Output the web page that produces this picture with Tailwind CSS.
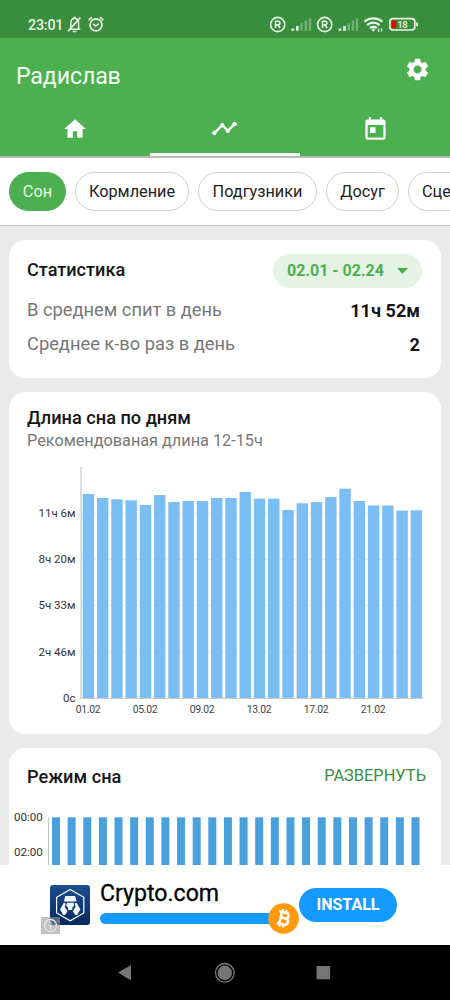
<!DOCTYPE html>
<html lang="ru">
<head>
<meta charset="utf-8">
<title>Статистика сна</title>
<script src="https://cdn.jsdelivr.net/npm/@tailwindcss/browser@4"></script>
</head>
<body class="bg-[#eaeaea] font-['Roboto',sans-serif]">
<div class="w-[450px] h-[1000px] flex flex-col overflow-hidden text-[#161616]">

  <!-- Status bar -->
  <div class="h-[38px] shrink-0 bg-[#388e3c] flex items-start pt-[15px] pl-7 text-[#e8f5e6]">
    <span class="text-[14.3px] tracking-[-0.2px] font-medium leading-[20px] w-[38px] whitespace-nowrap">23:01</span>
    <svg class="w-[384px] h-5 shrink-0" viewBox="66 15 384 20" fill="none" stroke="currentColor">
      <g stroke-width="1.5">
        <path d="M69.500 29.300h10.800M70.800 29V23.500c0-3 1.500-5 3.800-5 2.400 0 4 2 4 5V29" />
        <path d="M68 31.200 80.300 17.600" stroke-width="1.7"/>
        <path d="M72.800 31.500h3.600M73.300 17.400h2.600"/>
      </g>
      <g stroke-width="1.700">
        <circle cx="96" cy="24.800" r="6"/>
        <path d="M93.300 23.800 95.600 26.200 98.800 23.600" />
        <path d="M88.600 20.200 92 17M103.400 20.200 100 17"/>
      </g>
      <g stroke-width="1.600">
        <circle cx="277.700" cy="24.500" r="7.100"/><path d="M275.500 28v-6.800h2.600a1.800 1.800 0 0 1 0 3.700h-2.600M278 25l2 3"/>
        <circle cx="324.700" cy="24.500" r="7.100"/><path d="M322.500 28v-6.800h2.600a1.800 1.800 0 0 1 0 3.700h-2.600M325 25l2 3"/>
      </g>
      <g stroke="none" fill="currentColor">
        <path d="M291.400 28.600h2.800v2.200h-2.800zM296 26h2.600v4.800H296z"/>
        <path opacity=".35" d="M300.400 23.300h2.400v7.500h-2.400zM304.600 20.800h2.400v10h-2.400zM308.800 18.200h2.400v12.600h-2.400z"/>
        <path d="M338.600 28.600h2.800v2.200h-2.800zM343.200 26h2.600v4.800h-2.600z"/>
        <path opacity=".35" d="M347.500 23.300h2.400v7.500h-2.400zM351.700 20.800h2.400v10h-2.400zM355.800 18.200h2.400v12.600h-2.400z"/>
      </g>
      <g stroke-width="2.200">
        <path d="M364.400 21.700c5-4.500 13-4.500 18 0"/>
        <path d="M367.200 25.100c3.600-3.200 8.800-3.200 12.400 0"/>
        <path d="M370 28.200c2-1.700 4.800-1.700 6.800 0"/>
      </g>
      <circle cx="373.400" cy="30" r="1.400" fill="currentColor" stroke="none"/>
      <path d="M378.800 28.400v3.200M381.400 28.400v3.200M377.700 30.500l1.100 1.300M382.400 29.500l-1-1.200" stroke-width="1"/>
      <rect x="389.800" y="18.600" width="25" height="11.400" rx="3.200" stroke-width="1.700"/>
      <rect x="391.800" y="20.400" width="4.600" height="7.800" rx="1" fill="#d50e00" stroke="none"/>
      <path d="M417 22.600v3.600" stroke-width="1.800"/>
      <text x="397.200" y="27.900" font-size="9.600" font-weight="500" fill="currentColor" stroke="none" textLength="10.400">18</text>
    </svg>
  </div>

  <!-- App bar -->
  <div class="h-[118px] shrink-0 bg-[#4caf50] flex flex-col text-white">
    <div class="h-[64px] flex items-center justify-between pl-4 pr-[19px]">
      <span class="text-[23.200px] leading-8 tracking-[-0.15px] mt-[12px] text-[#f3fbf1]">Радислав</span>
      <svg class="w-[27px] h-[27px] -mt-px" viewBox="0 0 24 24" fill="currentColor"><path d="M19.140 12.940c.04-.3.06-.61.06-.94 0-.32-.02-.64-.07-.94l2.030-1.580a.49.49 0 0 0 .12-.61l-1.920-3.320a.488.488 0 0 0-.59-.22l-2.390.96c-.5-.38-1.030-.7-1.620-.94l-.36-2.540a.484.484 0 0 0-.48-.41h-3.840c-.24 0-.43.17-.47.41l-.36 2.540c-.59.24-1.130.57-1.620.94l-2.390-.96c-.22-.08-.47 0-.59.22L2.740 8.870c-.12.21-.08.47.12.61l2.030 1.580c-.05.3-.09.63-.09.94s.02.64.07.94l-2.030 1.580a.49.49 0 0 0-.12.61l1.920 3.320c.12.22.37.29.59.22l2.390-.96c.5.38 1.030.7 1.620.94l.36 2.540c.05.24.24.41.48.41h3.840c.24 0 .44-.17.47-.41l.36-2.540c.59-.24 1.130-.56 1.620-.94l2.390.96c.22.08.47 0 .59-.22l1.920-3.320c.12-.22.07-.47-.12-.61l-2.010-1.580zM12 15.600c-1.980 0-3.600-1.620-3.600-3.600s1.620-3.600 3.600-3.600 3.600 1.620 3.600 3.600-1.620 3.600-3.600 3.600z"/></svg>
    </div>
    <div class="h-[54px] grid grid-cols-3">
      <div class="flex justify-center pt-[14px]"><svg class="w-[26px] h-[26px]" viewBox="0 0 24 24" fill="currentColor"><path d="M10 20v-6h4v6h5v-8h3L12 3 2 12h3v8z"/></svg></div>
      <div class="flex justify-center pt-[13px] pr-[2px] border-b-[3px] border-white"><svg class="w-[27px] h-[27px]" viewBox="0 0 24 24" fill="currentColor"><path d="M23 8c0 1.100-.9 2-2 2-.18 0-.35-.02-.51-.07l-3.560 3.550c.05.16.07.34.07.52 0 1.100-.9 2-2 2s-2-.9-2-2c0-.18.02-.36.07-.52l-2.550-2.550c-.16.05-.34.07-.52.07s-.36-.02-.52-.07l-4.550 4.560c.05.16.07.33.07.51 0 1.100-.9 2-2 2s-2-.9-2-2 .9-2 2-2c.18 0 .35.02.51.07l4.560-4.550C8.020 9.360 8 9.180 8 9c0-1.100.9-2 2-2s2 .9 2 2c0 .18-.02.36-.07.52l2.550 2.550c.16-.05.34-.07.52-.07s.36.02.52.07l3.550-3.560C19.020 8.350 19 8.180 19 8c0-1.100.9-2 2-2s2 .9 2 2z"/></svg></div>
      <div class="flex justify-center pt-[14px]"><svg class="w-[27px] h-[27px]" viewBox="0 0 24 24" fill="currentColor"><path d="M19 3h-1V1h-2v2H8V1H6v2H5c-1.110 0-1.990.9-1.990 2L3 19c0 1.100.89 2 2 2h14c1.100 0 2-.9 2-2V5c0-1.100-.9-2-2-2zm0 16H5V8h14v11zM7 10h5v5H7z"/></svg></div>
    </div>
  </div>

  <!-- Category chips -->
  <div class="h-[70px] shrink-0 bg-white border-t-2 border-b border-t-[#b9bbb9] border-b-[#c2c2c2] flex gap-[9px] pt-[14px] pl-[9px] overflow-hidden text-[16.300px] leading-[37px] whitespace-nowrap text-[#222]">
    <div class="w-[57px] h-[39px] shrink-0 rounded-full bg-[#4caf50] border border-[#4caf50] text-[#eefbe9] text-center">Сон</div>
    <div class="w-[114px] h-[39px] shrink-0 rounded-full border border-[#cfd0cf] text-center">Кормление</div>
    <div class="w-[119px] h-[39px] shrink-0 rounded-full border border-[#cfd0cf] text-center">Подгузники</div>
    <div class="w-[73px] h-[39px] shrink-0 rounded-full border border-[#cfd0cf] text-center">Досуг</div>
    <div class="w-[96px] h-[39px] shrink-0 rounded-full border border-[#cfd0cf] pl-[13px]">Сце</div>
  </div>

  <!-- Content -->
  <div class="h-[639px] shrink-0 bg-[#eaeaea] px-[9px] pt-[14px] flex flex-col gap-[14px] overflow-hidden">
    <section class="h-[138px] shrink-0 bg-white rounded-[16px] pl-[18px] pr-[19px] pt-[14px]">
      <div class="flex justify-between items-center h-[34px]">
        <h2 class="text-[18.100px] leading-[24px] -mt-[2px] font-medium">Статистика</h2>
        <div class="w-[149px] h-[34px] rounded-full bg-[#e4f3e4] flex items-center pl-[14px] text-[#4caf50] text-[16px] font-bold whitespace-nowrap">
          <span class="w-[96px]">02.01 - 02.24</span>
          <svg class="w-[11px] h-[6px] ml-[14px]" viewBox="0 0 11 6" fill="currentColor"><path d="M0 0h11L5.500 6z"/></svg>
        </div>
      </div>
      <div class="flex justify-between items-center h-[34px] mt-[6px] pr-[2px]">
        <span class="text-[18.300px] leading-[24px] -mt-[2px] text-[#777]">В среднем спит в день</span>
        <b class="text-[18.100px] leading-[24px]">11ч 52м</b>
      </div>
      <div class="flex justify-between items-center h-[34px] pr-[2px]">
        <span class="text-[18.300px] leading-[24px] -mt-[2px] text-[#777]">Среднее к-во раз в день</span>
        <b class="text-[18.100px] leading-[24px]">2</b>
      </div>
    </section>

    <section class="h-[342px] shrink-0 bg-white rounded-[16px] pt-[14px]">
      <h2 class="pl-[18px] text-[18.200px] leading-[23px] font-medium">Длина сна по дням</h2>
      <p class="pl-[18px] text-[16.250px] leading-[23px] text-[#777]">Рекомендованая длина 12-15ч</p>
      <svg class="w-[432px] h-[270px] block" viewBox="9 452 432 270" id="length-chart">
        <path d="M81 513.500H422M81 559.500H422M81 605.500H422M81 652H422" stroke="#ececec" stroke-width="1" fill="none"/>
        <path d="M81 467V698.500H423" stroke="#c9c9c9" stroke-width="1.200" fill="none"/>
        <g id="length-bars" fill="#7bbef5"></g>
        <g fill="#333" font-size="11.500" text-anchor="end">
          <text x="75.500" y="516.800">11ч 6м</text>
          <text x="75.500" y="563">8ч 20м</text>
          <text x="75.500" y="609.300">5ч 33м</text>
          <text x="75.500" y="655.500">2ч 46м</text>
          <text x="75.500" y="701.700">0с</text>
        </g>
        <g fill="#444" font-size="10.400" text-anchor="middle" letter-spacing="-0.300">
          <text x="88" y="712.800">01.02</text>
          <text x="145" y="712.800">05.02</text>
          <text x="202.100" y="712.800">09.02</text>
          <text x="259" y="712.800">13.02</text>
          <text x="316.100" y="712.800">17.02</text>
          <text x="373.100" y="712.800">21.02</text>
        </g>
      </svg>
    </section>

    <section class="h-[200px] shrink-0 bg-white rounded-[16px] pt-[16px]">
      <div class="flex justify-between items-center h-[26px] pl-[18px] pr-[15px]">
        <h2 class="text-[18.200px] leading-[24px] font-medium">Режим сна</h2>
        <span class="text-[16.400px] leading-[24px] -mt-[2px] text-[#388e3c]">РАЗВЕРНУТЬ</span>
      </div>
      <svg class="w-[432px] h-[75px] block" viewBox="9 790 432 75">
        <path d="M48.500 817V865" stroke="#c4c4c4" stroke-width="1"/>
        <g id="schedule-bars" fill="#4b9fda"></g>
        <g fill="#333" font-size="11.600" text-anchor="end">
          <text x="42.800" y="821">00:00</text>
          <text x="42.800" y="856">02:00</text>
        </g>
      </svg>
    </section>
  </div>

  <!-- Ad banner -->
  <div class="h-[80px] shrink-0 bg-white flex pl-[50px] relative">
    <svg class="w-10 h-10 mt-5 shrink-0" viewBox="0 0 40 40">
      <defs><linearGradient id="badge" x1="0" y1="0" x2="0" y2="1"><stop offset="0" stop-color="#1a4f92"/><stop offset="1" stop-color="#082a5e"/></linearGradient></defs>
      <rect width="40" height="40" rx="3" fill="url(#badge)"/>
      <path d="M20.200 4.500 33.800 12.300V28L20.200 35.800 6.600 28V12.300z" fill="none" stroke="#fff" stroke-width="1.200"/>
      <path d="M15.300 11h9.800l1.500 5.600H13.800zM17 17.800h6.600l.6 2.700-1.900 2.300v2.100h-4.200v-2.100l-1.900-2.300zM13.700 18l2 .2-.9 3.800 2.800 4.300-2.600 3.600h-1.700L10 24.600zM26.700 18l-2 .2.9 3.800-2.800 4.300 2.600 3.600h1.700l3.300-5.300z" fill="#f4f7fb"/>
    </svg>
    <div class="ml-[10px] w-[199px] pt-[14px]">
      <div class="text-[23.100px] leading-[30px] text-black font-normal [-webkit-text-stroke:0.3px_black]">Crypto.com</div>
      <div class="mt-[4px] h-[11px] w-[190px] rounded-full bg-[#159bff]"></div>
    </div>
    <div class="w-[98px] h-[34px] mt-[23px] rounded-full bg-[#159bff] text-white text-[16px] font-bold leading-[34px] text-center">INSTALL</div>
    <svg class="absolute left-[268px] top-[38px] w-[31px] h-[31px]" viewBox="0 0 31 31">
      <circle cx="15.500" cy="15.500" r="15.300" fill="#ff9b0b"/>
      <g transform="rotate(13 15.500 15.500)" fill="none" stroke="#fff" stroke-width="2.500">
        <path d="M9.800 9.300h6.700c4.400 0 4.400 5.700 0 5.700h-4M9.800 21.400h7.200c5 0 5-6.400 0-6.400M12.500 9.300v12"/>
        <path d="M13.200 6.300v3M16.800 6.300v3M13.200 21.500v3M16.800 21.500v3" stroke-width="1.800"/>
      </g>
    </svg>
    <div class="absolute left-[41px] top-[52px] w-[19px] h-[17px] bg-[#9a9a9a]/60 flex items-center justify-center">
      <svg class="w-[15px] h-[15px]" viewBox="0 0 15 15" fill="none" stroke="#e4e4e4"><circle cx="7.500" cy="7.500" r="6" stroke-width="1.300"/><path d="M7.500 6.500v4.500M7.500 3.800v1.400" stroke-width="1.700"/></svg>
    </div>
  </div>

  <!-- System navigation -->
  <div class="h-[55px] shrink-0 bg-black">
    <svg class="w-[450px] h-[55px] block" viewBox="0 945 450 55">
      <path d="M118 972.500 131 965v15.500z" fill="#757575"/>
      <circle cx="224.800" cy="972.800" r="9.300" fill="none" stroke="#7a7a7a" stroke-width="1.300"/>
      <circle cx="224.800" cy="972.800" r="7.200" fill="#757575"/>
      <rect x="316.500" y="966" width="13.600" height="13.300" fill="#757575"/>
    </svg>
  </div>
</div>
<script>
  const ns = 'http://www.w3.org/2000/svg';
  function addBar(group, x, y, w, h) {
    const r = document.createElementNS(ns, 'rect');
    r.setAttribute('x', x); r.setAttribute('y', y);
    r.setAttribute('width', w); r.setAttribute('height', h);
    group.appendChild(r);
  }
  const tops = [494, 498, 499.3, 500.3, 505, 495, 502, 501, 501, 498, 498, 492, 498.7, 498.7, 510, 503.3, 502, 497, 488.7, 501, 505.5, 505.5, 510.6, 510.3];
  const lengthBars = document.getElementById('length-bars');
  const scheduleBars = document.getElementById('schedule-bars');
  tops.forEach((top, i) => {
    addBar(lengthBars, 82.7 + i * 14.26, top, 11.4, 698 - top);
    addBar(scheduleBars, 52 + i * 15.63, 817.3, 8, 50);
  });
</script>
</body>
</html>
